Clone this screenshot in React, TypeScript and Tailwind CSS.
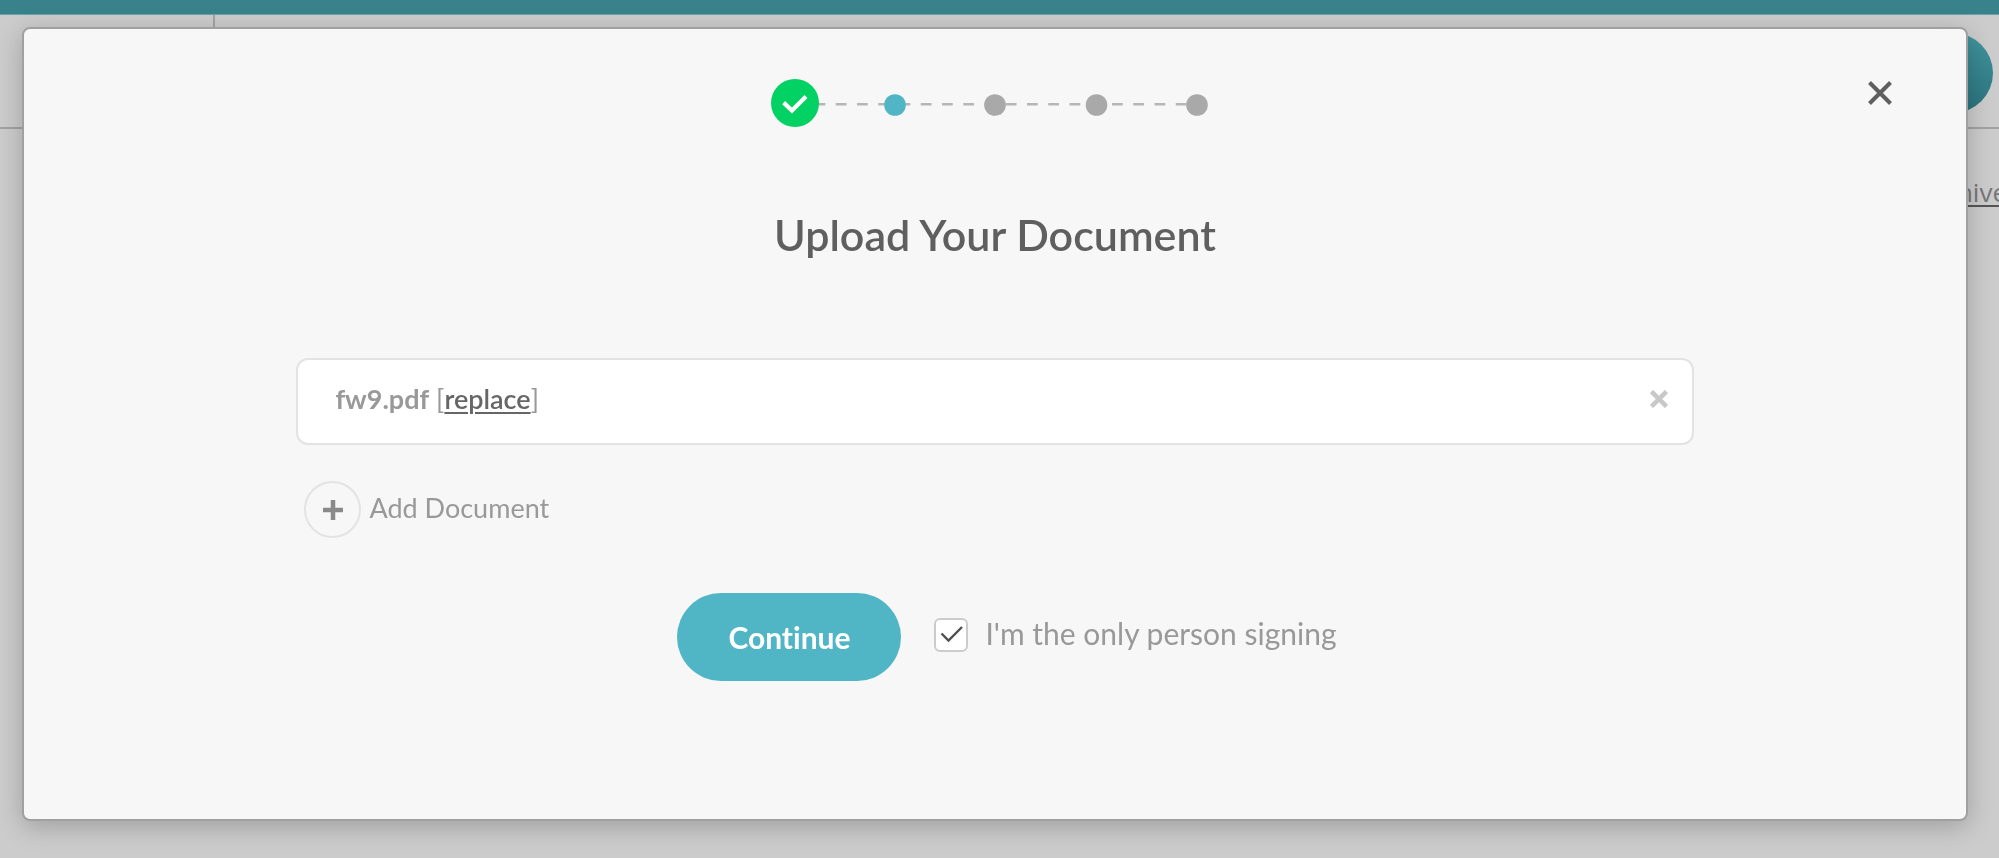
import React, { useState } from "react";

// 進捗ステップ（緑 = 完了、青 = 現在）
const Stepper = () => (
  <svg width="438" height="48" viewBox="0 0 438 48" role="img" aria-label="Step 2 of 5">
    <line x1="1" y1="25.3" x2="425" y2="25.3" stroke="#b6b6b6" strokeWidth="2.4" strokeDasharray="10.8 10.45" />
    <circle cx="24" cy="24" r="24" fill="#02d163" />
    <path d="M12.6 23.6 21 31.5 35 17.4" fill="none" stroke="#fff" strokeWidth="4.2" />
    <circle cx="124" cy="26" r="10.8" fill="#50b5c5" />
    <circle cx="224" cy="26" r="10.8" fill="#a9a9a9" />
    <circle cx="325.5" cy="26" r="10.8" fill="#a9a9a9" />
    <circle cx="426" cy="26" r="10.8" fill="#a9a9a9" />
  </svg>
);

// モーダルの後ろに見えるページ
const PageBehind = () => (
  <div className="h-screen overflow-hidden bg-[#cccccc]">
    <div className="h-[15px] border-b border-[#6aa3a9] bg-[#3a828b]" />
    <div className="flex h-[114px] border-b-2 border-[#a3a3a3]">
      <div className="w-[215px] border-r-2 border-[#a3a3a3]" />
      <div className="flex flex-1 items-center justify-end pt-1 pr-[6px]">
        <div className="size-20 rounded-full bg-linear-to-b from-[#41959f] to-[#2b737d]" />
      </div>
    </div>
    <div className="-mr-2 flex justify-end pt-[45px]">
      <a
        href="#archive"
        className="font-['Open_Sans',sans-serif] text-[26px] leading-[36px] text-[#777777] underline decoration-[#555555] decoration-2 underline-offset-3"
      >
        Archive
      </a>
    </div>
  </div>
);

const App = () => {
  const [onlySigner, setOnlySigner] = useState(true);

  return (
    <div className="font-['Lato',sans-serif] [font-variant-ligatures:none]">
      <PageBehind />

      <div className="fixed inset-0 flex pt-[27px] pr-[31px] pb-[37px] pl-[22px]">
        <div
          role="dialog"
          aria-labelledby="upload-title"
          className="relative flex-1 rounded-lg border-2 border-[#a0a0a0] bg-[#f7f7f7] px-[14%] pt-[50px] shadow-[0_6px_26px_rgba(0,0,0,0.22)]"
        >
          <button type="button" aria-label="Close" className="absolute top-[50px] right-[72px] p-0.5">
            <svg width="24" height="24" viewBox="0 0 24 24" stroke="#5f5f5f" strokeWidth="4">
              <path d="M1.5 1.5 22.5 22.5M22.5 1.5 1.5 22.5" />
            </svg>
          </button>

          {/* ステップ */}
          <div className="flex justify-center pr-2.5">
            <Stepper />
          </div>

          <h1 id="upload-title" className="mt-[84px] text-center text-[43px] leading-[48px] font-semibold text-[#5f5f5f]">
            Upload Your Document
          </h1>

          {/* アップロード済みファイル */}
          <div className="mt-[99px] flex h-[87px] items-center justify-between rounded-xl border-2 border-[#e3e3e3] bg-white pr-6 pb-1.5 pl-[37px]">
            <p className="text-[27px] leading-8 text-[#999999]">
              <span className="font-bold">fw9.pdf</span> [
              <button type="button" className="font-semibold text-[#666666] underline decoration-2 underline-offset-3">
                replace
              </button>
              ]
            </p>
            <button type="button" aria-label="Remove fw9.pdf">
              <svg width="18" height="18" viewBox="0 0 18 18" stroke="#c8c8c8" strokeWidth="4.5">
                <path d="M1.5 1.5 16.5 16.5M16.5 1.5 1.5 16.5" />
              </svg>
            </button>
          </div>

          <button type="button" className="mt-9 ml-2 flex items-center gap-2 text-[27px] leading-8 text-[#999999]">
            <span className="flex size-[57px] items-center justify-center rounded-full border-2 border-[#e3e3e3]">
              <svg width="20" height="20" viewBox="0 0 20 20" stroke="#8a8a8a" strokeWidth="4.5">
                <path d="M10 0V20M0 10H20" />
              </svg>
            </span>
            <span className="pb-1">Add Document</span>
          </button>

          {/* アクション */}
          <div className="mt-[55px] flex items-center justify-center pl-6">
            <button type="button" className="h-[88px] w-[224px] rounded-full bg-[#50b5c5] text-[30px] font-bold text-white">
              Continue
            </button>
            <label className="mb-1 ml-[33px] flex items-center gap-[17px] text-[30px] leading-9 text-[#999999]">
              <span className="relative flex size-[34px]">
                <input
                  type="checkbox"
                  checked={onlySigner}
                  onChange={(e) => setOnlySigner(e.target.checked)}
                  className="size-[34px] appearance-none rounded-md border-2 border-[#cccccc] bg-white"
                />
                {onlySigner && (
                  <svg
                    className="pointer-events-none absolute inset-0"
                    width="34"
                    height="34"
                    viewBox="0 0 34 34"
                    fill="none"
                    stroke="#4f4f4f"
                    strokeWidth="2.4"
                  >
                    <path d="M7.5 15.5 14.5 22.5 28 9" />
                  </svg>
                )}
              </span>
              <span className="pb-1">I'm the only person signing</span>
            </label>
          </div>
        </div>
      </div>
    </div>
  );
};

export default App;
